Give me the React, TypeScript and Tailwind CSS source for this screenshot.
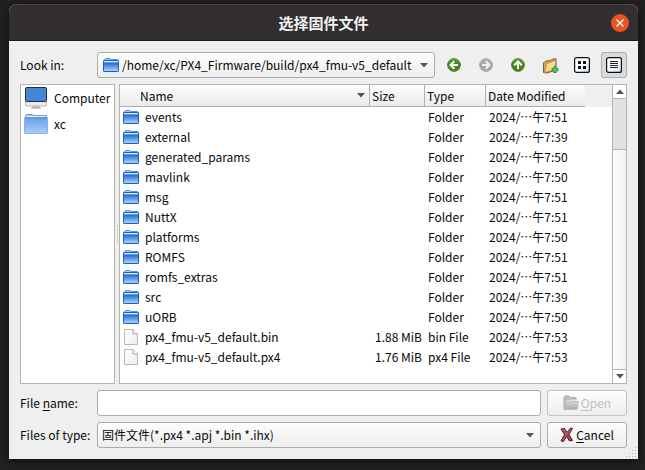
import type { ReactNode } from "react";

type Entry = { name: string; size: string; type: string; date: string };

const entries: Entry[] = [
  { name: "events", size: "", type: "Folder", date: "2024/⋯午7:51" },
  { name: "external", size: "", type: "Folder", date: "2024/⋯午7:39" },
  { name: "generated_params", size: "", type: "Folder", date: "2024/⋯午7:50" },
  { name: "mavlink", size: "", type: "Folder", date: "2024/⋯午7:50" },
  { name: "msg", size: "", type: "Folder", date: "2024/⋯午7:51" },
  { name: "NuttX", size: "", type: "Folder", date: "2024/⋯午7:51" },
  { name: "platforms", size: "", type: "Folder", date: "2024/⋯午7:50" },
  { name: "ROMFS", size: "", type: "Folder", date: "2024/⋯午7:51" },
  { name: "romfs_extras", size: "", type: "Folder", date: "2024/⋯午7:51" },
  { name: "src", size: "", type: "Folder", date: "2024/⋯午7:39" },
  { name: "uORB", size: "", type: "Folder", date: "2024/⋯午7:50" },
  { name: "px4_fmu-v5_default.bin", size: "1.88 MiB", type: "bin File", date: "2024/⋯午7:53" },
  { name: "px4_fmu-v5_default.px4", size: "1.76 MiB", type: "px4 File", date: "2024/⋯午7:53" },
];

function Gradients() {
  return (
    <svg width="0" height="0" className="absolute" aria-hidden="true">
      <defs>
        <linearGradient id="folderFill" x1="0" y1="0" x2="0" y2="1">
          <stop offset="0.2" stopColor="#2268cc" />
          <stop offset="1" stopColor="#b8d5f8" />
        </linearGradient>
        <linearGradient id="homeFill" x1="0" y1="0" x2="0" y2="1">
          <stop offset="0" stopColor="#6ea2e6" />
          <stop offset="1" stopColor="#a9cbf6" />
        </linearGradient>
        <linearGradient id="fileFill" x1="0" y1="0" x2="1" y2="1">
          <stop offset="0" stopColor="#ffffff" />
          <stop offset="1" stopColor="#ededed" />
        </linearGradient>
        <linearGradient id="openFill" x1="0" y1="0" x2="0" y2="1">
          <stop offset="0" stopColor="#d6d6d6" />
          <stop offset="1" stopColor="#ababab" />
        </linearGradient>
        <linearGradient id="viewFill" x1="0" y1="0" x2="1" y2="1">
          <stop offset="0.5" stopColor="#ffffff" />
          <stop offset="1" stopColor="#c3e2fa" />
        </linearGradient>
      </defs>
    </svg>
  );
}

function FolderIcon() {
  return (
    <svg width="16" height="14" viewBox="0 0 16 14" className="block shrink-0" aria-hidden="true">
      <path d="M1.5 3V1.5L3 .5h3.500L8 1.500h6.500V3" fill="#a8cdf6" stroke="#4e92e0" />
      <rect x=".5" y="2.500" width="15" height="11" rx=".6" fill="url(#folderFill)" stroke="#0c62c6" />
      <path d="M1 3.500h14" stroke="#dcebfc" />
      <path d="M1 4.500h14" stroke="#5b98e2" />
    </svg>
  );
}

function HomeIcon() {
  return (
    <svg width="24" height="20" viewBox="0 0 24 20" className="block shrink-0" aria-hidden="true">
      <path d="M1.500 4V1.500L3 .5h5l1.500 1h13V4" fill="#9cc2f2" stroke="#6a9fe0" />
      <path d="M2 2.500h20" stroke="#e6f0fc" />
      <rect x=".5" y="3.500" width="23" height="16" rx=".5" fill="url(#homeFill)" stroke="#86b2ec" />
      <path d="M1 4h22" stroke="#4b86d2" />
    </svg>
  );
}

function ComputerIcon() {
  return (
    <svg width="24" height="22" viewBox="0 0 24 22" className="block shrink-0" aria-hidden="true">
      <path d="M9 19h6l1.500 2.500h-9z" fill="#bdbdb6" />
      <path d="M7 21h10" stroke="#b5b5ae" />
      <path d="M1.500 14v4q0 1 1 1h19q1 0 1-1v-4z" fill="#ecece8" stroke="#b8b8b2" />
      <rect x="1.500" y=".5" width="21" height="14" rx="1" fill="#4686d4" stroke="#1d2b44" />
    </svg>
  );
}

function FileIcon() {
  return (
    <svg width="14" height="16" viewBox="0 0 14 16" className="mx-px block shrink-0" aria-hidden="true">
      <path d="M.5.5h8.500l4.500 4.500v10.500H.5z" fill="url(#fileFill)" stroke="#b9b9b9" strokeLinejoin="round" />
      <path d="M9 .5V5h4.500" fill="#f4f4f4" stroke="#a5a5a5" strokeLinejoin="round" />
    </svg>
  );
}

function ArrowBadge({ direction }: { direction: "left" | "right" | "up" }) {
  const turn = { left: 0, up: 90, right: 180 }[direction];
  const muted = direction === "right";
  return (
    <svg width="16" height="16" viewBox="0 0 16 16" aria-hidden="true">
      <circle cx="8" cy="8" r="6.300" fill={muted ? "#a6a6a6" : "#46861c"} stroke={muted ? "#a0a0a0" : "#3b7a18"} />
      <path d="M3 6a5.300 5.300 0 0 1 10 0" fill="none" stroke={muted ? "#b6b6b6" : "#6ba445"} />
      <g transform={`rotate(${turn} 8 8)`}>
        <path d="M8.300 4.200L4.500 8l3.800 3.800M4.900 8H12" fill="none" stroke={muted ? "#f0f0f0" : "#fff"} strokeWidth="2" />
      </g>
    </svg>
  );
}

function NewFolderIcon() {
  return (
    <svg width="17" height="17" viewBox="0 0 17 17" aria-hidden="true">
      <path d="M1.500 15.500V6L3 4.500l3-1 1 .5 5.500-2.500 1.500.5v11l-9 3z" fill="#d9a653" stroke="#7a5219" strokeWidth=".9" strokeLinejoin="round" />
      <path d="M2.500 15.500L4.500 7 14 3.500 12.500 13z" fill="#f6d591" stroke="#a87a35" strokeWidth=".7" strokeLinejoin="round" />
      <path d="M5.500 7.500L13 4.800" stroke="#fdeec6" />
      <path d="M13 9.500v6.500M9.700 12.700h6.600" stroke="#1c7a2c" strokeWidth="3" />
      <path d="M13 10.200v5M10.400 12.700h5.200" stroke="#3ddc68" strokeWidth="1.500" />
    </svg>
  );
}

function ViewIcon({ kind }: { kind: "list" | "detail" }) {
  return (
    <svg width="16" height="16" viewBox="0 0 16 16" aria-hidden="true">
      <rect x=".6" y=".6" width="14.800" height="14.800" rx="2" fill="url(#viewFill)" stroke="#0c0f14" strokeWidth="1.200" />
      {kind === "list" ? (
        <path d="M4 4h3v3H4zM9 4h3v3H9zM4 9h3v3H4zM9 9h3v3H9z" fill="#111" />
      ) : (
        <path d="M4 4.500h8M4 6.500h8M4 8.500h8M4 10.500h8" stroke="#222" />
      )}
    </svg>
  );
}

function OpenIcon() {
  return (
    <svg width="16" height="16" viewBox="0 0 16 16" aria-hidden="true">
      <path d="M1 14.500V2l1-1h4l1.500 1.500H13V7" fill="#bdbdbd" stroke="#b0b0b0" />
      <path d="M3 6l4-1 7-.5v3H3z" fill="#e6e6e6" />
      <path d="M1 14.500L3.500 8 9 6.500h6.500L14 14.500z" fill="url(#openFill)" stroke="#bcbcbc" />
    </svg>
  );
}

function CancelIcon() {
  return (
    <svg width="14" height="16" viewBox="0 0 14 16" aria-hidden="true">
      <path
        d="M1 2l3.500-.5 2.500 4L10.500 1l2 .5-3.500 6L12.500 13.500l-3 .5-3-4.500-3 5-2.500-.5 3.500-6.500z"
        fill="#a9404a"
        stroke="#4b2428"
        strokeLinejoin="round"
      />
      <path d="M2.500 3l1.500-.3 2.800 4.600L10.500 2.300M2.800 13L6 8" fill="none" stroke="#cf7f86" strokeWidth=".7" />
    </svg>
  );
}

function Triangle({ up = false }: { up?: boolean }) {
  return (
    <svg width="8" height="5" viewBox="0 0 8 5" aria-hidden="true">
      <path d={up ? "M0 5L4 .5 8 5z" : "M0 0h8L4 4.500z"} fill="#555" />
    </svg>
  );
}

function ToolButton({ label, active = false, disabled = false, children }: { label: string; active?: boolean; disabled?: boolean; children: ReactNode }) {
  return (
    <button
      type="button"
      aria-label={label}
      disabled={disabled}
      className={`flex size-[26px] items-center justify-center rounded-[3px] border ${active ? "border-[#aeaeae] bg-[#dadada]" : "border-transparent"}`}
    >
      {children}
    </button>
  );
}

const combo =
  "h-[26px] w-full appearance-none rounded-[3px] border border-[#acacac] bg-linear-to-b from-[#fdfdfd] to-[#eeeeee] pr-5 outline-none";
const push =
  "flex h-[26px] w-20 items-center justify-center gap-0.5 rounded-[3px] border bg-linear-to-b from-[#fdfdfd] to-[#eeeeee]";
const head = "border-b border-[#b0b0b0] bg-linear-to-b from-[#fcfcfc] to-[#ebebeb] p-0 text-left font-normal";
const fieldLabel = "w-[71px] shrink-0 whitespace-nowrap";
const place = "flex h-[26px] items-center gap-1.5 pl-[3px]";

export default function App() {
  return (
    <div className="min-h-screen bg-[#212121] pt-1 pr-[7px] pb-[11px] pl-[9px] font-['Noto_Sans_CJK_SC',sans-serif] text-xs/5 text-[#080808]">
      <Gradients />
      <main className="overflow-hidden rounded-t-lg bg-[#efefef] shadow-[0_2px_8px_rgba(0,0,0,0.6)]">
        <header className="grid h-[37px] grid-cols-[1fr_auto_1fr] items-center border-t border-b border-t-[#484647] border-b-[#1d1b1c] bg-[#332f30] px-[9px]">
          <h1 className="col-start-2 text-[15px] font-bold text-[#f2f2f2]">选择固件文件</h1>
          <button type="button" aria-label="Close" className="flex size-[18px] items-center justify-center justify-self-end rounded-full bg-[#e95420]">
            <svg width="8" height="8" viewBox="0 0 8 8" aria-hidden="true">
              <path d="M.5.5l7 7M7.500.5l-7 7" stroke="#fff" strokeWidth="1.300" />
            </svg>
          </button>
        </header>

        <div className="relative flex flex-col gap-1.5 p-[11px]">
          <div className="flex items-center gap-1.5">
            <label htmlFor="lookin" className={fieldLabel}>Look in:</label>
            <div className="relative min-w-0 flex-1">
              <select id="lookin" className={`${combo} block pl-6`}>
                <option>/home/xc/PX4_Firmware/build/px4_fmu-v5_default</option>
              </select>
              <span className="pointer-events-none absolute inset-y-0 left-1.5 flex items-center"><FolderIcon /></span>
              <span className="pointer-events-none absolute inset-y-0 right-[7px] flex items-center"><Triangle /></span>
            </div>
            <ToolButton label="Back"><ArrowBadge direction="left" /></ToolButton>
            <ToolButton label="Forward" disabled><ArrowBadge direction="right" /></ToolButton>
            <ToolButton label="Parent Directory"><ArrowBadge direction="up" /></ToolButton>
            <ToolButton label="Create New Folder"><NewFolderIcon /></ToolButton>
            <ToolButton label="List View"><ViewIcon kind="list" /></ToolButton>
            <ToolButton label="Detail View" active><ViewIcon kind="detail" /></ToolButton>
          </div>

          <div className="flex h-[300px]">
            <nav className="w-[95px] shrink-0 border border-[#b4b4b4] bg-white">
              <ul>
                <li className={place}><ComputerIcon />Computer</li>
                <li className={place}><HomeIcon />xc</li>
              </ul>
            </nav>
            <div className="flex w-1 shrink-0 items-center justify-center">
              <span className="h-[18px] border-l border-dotted border-[#b5b5b5]" />
            </div>
            <section className="flex min-w-0 flex-1 border border-[#b4b4b4] bg-white">
              <div className="min-w-0 flex-1">
                <table className="w-full table-fixed border-separate border-spacing-0">
                  <colgroup>
                    <col />
                    <col className="w-[55px]" />
                    <col className="w-[61px]" />
                    <col className="w-[99px]" />
                    <col className="w-[27px]" />
                  </colgroup>
                  <thead>
                    <tr className="h-[22px]">
                      <th className={`${head} border-r`}>
                        <span className="flex items-center justify-between pr-1 pl-5">Name<Triangle /></span>
                      </th>
                      <th className={`${head} border-r pl-0.5`}>Size</th>
                      <th className={`${head} border-r pl-0.5`}>Type</th>
                      <th className={`${head} pl-0.5`}>Date Modified</th>
                      <td className="bg-[#efefef] p-0" />
                    </tr>
                  </thead>
                  <tbody>
                    {entries.map((e) => (
                      <tr key={e.name} className="h-5 whitespace-nowrap">
                        <td className="p-0">
                          <span className="flex h-5 items-center gap-1.5 pl-[3px]">
                            {e.type === "Folder" ? <FolderIcon /> : <FileIcon />}
                            {e.name}
                          </span>
                        </td>
                        <td className="p-0 pr-[3px] text-right">{e.size}</td>
                        <td className="p-0 pl-[3px]">{e.type}</td>
                        <td className="p-0 pl-[3px]">{e.date}</td>
                        <td className="p-0" />
                      </tr>
                    ))}
                  </tbody>
                </table>
              </div>
              <div className="flex w-3.5 shrink-0 flex-col border-l border-[#b4b4b4]">
                <button type="button" aria-label="Scroll up" className="flex h-3.5 items-center justify-center border-b border-[#b4b4b4]"><Triangle up /></button>
                <div className="h-[50px] bg-[#e2e2e2]" />
                <div className="flex-1 border-t border-[#b4b4b4] bg-linear-to-r from-[#fdfdfd] to-[#f0f0f0]" />
                <button type="button" aria-label="Scroll down" className="flex h-3.5 items-center justify-center border-t border-[#b4b4b4]"><Triangle /></button>
              </div>
            </section>
          </div>

          <div className="flex items-center gap-1.5">
            <label htmlFor="filename" className={fieldLabel}>File <u className="underline-offset-2">n</u>ame:</label>
            <input id="filename" type="text" className="h-[26px] min-w-0 flex-1 rounded-[3px] border border-[#acacac] bg-white px-1 outline-none" />
            <button type="button" disabled className={`${push} border-[#c4c4c4] text-[#bebebe]`}>
              <OpenIcon />
              <span><u className="underline-offset-2">O</u>pen</span>
            </button>
          </div>

          <div className="flex items-center gap-1.5">
            <label htmlFor="filetype" className={fieldLabel}>Files of type:</label>
            <div className="relative min-w-0 flex-1">
              <select id="filetype" className={`${combo} block pl-1`}>
                <option>固件文件(*.px4 *.apj *.bin *.ihx)</option>
              </select>
              <span className="pointer-events-none absolute inset-y-0 right-[7px] flex items-center"><Triangle /></span>
            </div>
            <button type="button" className={`${push} border-[#acacac]`}>
              <CancelIcon />
              <span><u className="underline-offset-2">C</u>ancel</span>
            </button>
          </div>

          <svg width="11" height="11" viewBox="0 0 11 11" className="absolute right-px bottom-px" aria-hidden="true">
            <path d="M9 0h1v1H9zM9 3h1v1H9zM6 3h1v1H6zM9 6h1v1H9zM6 6h1v1H6zM3 6h1v1H3zM9 9h1v1H9zM6 9h1v1H6zM3 9h1v1H3zM0 9h1v1H0z" fill="#b0b0b0" />
          </svg>
        </div>
      </main>
    </div>
  );
}
